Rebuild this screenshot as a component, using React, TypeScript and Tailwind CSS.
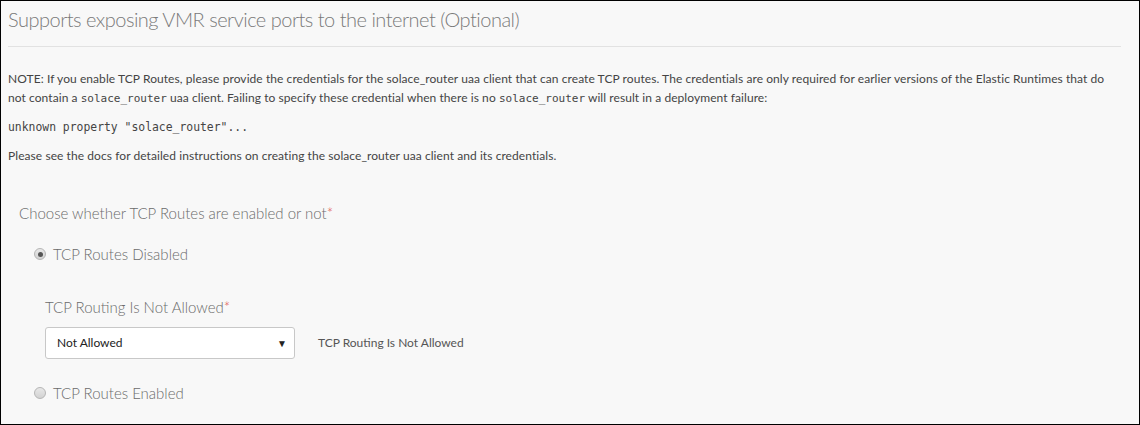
const Radio = ({ checked }: { checked?: boolean }) => (
  <span className="flex h-[12px] w-[12px] items-center justify-center rounded-full border border-[#b5b5b5] bg-gradient-to-b from-[#e8e8e8] to-[#d2d2d2]">
    {checked && <span className="h-[5px] w-[5px] rounded-full bg-[#555]" />}
  </span>
);

const mono = "font-['DejaVu_Sans_Mono',monospace]";

const App = () => {
  return (
    <div className="h-[425px] w-[1140px] overflow-hidden border border-black bg-[#f8f8f8] font-['Lato',sans-serif]">
      <div className="pl-[7px] pr-[18px]">
        <h2 className="pt-[2px] text-[20px] font-light leading-[32px] tracking-[-0.5px] text-[#7a7a7a]">
          Supports exposing VMR service ports to the internet (Optional)
        </h2>
        <hr className="mt-[11px] border-[#e2e2e2]" />
        <div className="pr-[14px] pt-[22px] text-[12px] leading-[19px] tracking-[0.07px] text-[#444]">
          <p>
            NOTE: If you enable TCP Routes, please provide the credentials for the solace_router uaa client that can
            create TCP routes. The credentials are only required for earlier versions of the Elastic Runtimes that do
            not contain a <code className={`${mono} text-[11px] tracking-normal`}>solace_router</code> uaa client.
            Failing to specify these credential when there is no{" "}
            <code className={`${mono} text-[11px] tracking-normal`}>solace_router</code> will result in a deployment
            failure:
          </p>
          <pre className={`${mono} mt-[10px] text-[11.4px] leading-[19px] tracking-normal`}>
            unknown property "solace_router"...
          </pre>
          <p className="mt-[9px]">
            Please see the docs for detailed instructions on creating the solace_router uaa client and its credentials.
          </p>
        </div>
      </div>

      <div className="pl-[18px] pt-[37px] text-[#6b6b6b]">
        <div className="text-[15px] font-light leading-[22px]">
          Choose whether TCP Routes are enabled or not<span className="text-[#e0504a]">*</span>
        </div>

        <label className="ml-[15px] mt-[19px] flex items-center gap-[7px] text-[15px] font-light leading-[22px]">
          <Radio checked />
          TCP Routes Disabled
        </label>

        <div className="ml-[26px] mt-[31px]">
          <div className="text-[15px] font-light leading-[22px]">
            TCP Routing Is Not Allowed<span className="text-[#e0504a]">*</span>
          </div>
          <div className="mt-[9px] flex items-center gap-[23px]">
            <div className="flex h-[32px] w-[250px] items-center justify-between rounded-[3px] border border-[#c8c8c8] bg-white pl-[11px] pr-[7px] text-[12px] text-[#222]">
              <span>Not Allowed</span>
              <span className="text-[10px] text-[#222]">▼</span>
            </div>
            <span className="text-[12px] text-[#555]">TCP Routing Is Not Allowed</span>
          </div>
        </div>

        <label className="ml-[15px] mt-[23px] flex items-center gap-[7px] text-[15px] font-light leading-[22px]">
          <Radio />
          TCP Routes Enabled
        </label>
      </div>
    </div>
  );
};

export default App;
